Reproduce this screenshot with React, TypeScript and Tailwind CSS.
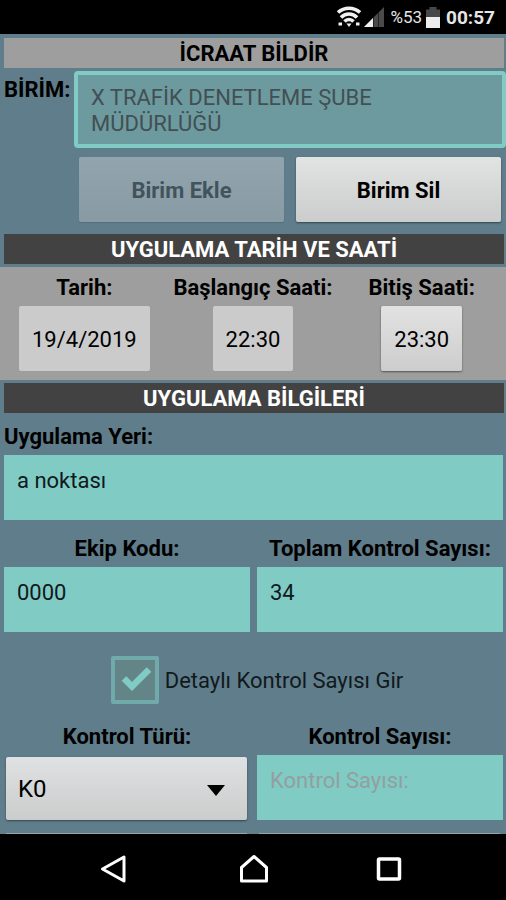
import { useState } from "react";
import type { ReactNode } from "react";

//Interface
interface SectionTitleProps {
    children: ReactNode;
    light?: boolean;
}

interface FieldProps {
    id: string;
    label: string;
    value: string;
    placeholder?: string;
    center?: boolean;
    onChange: (value: string) => void;
}

interface TimeButtonProps {
    id: string;
    label: string;
    value: string;
    raised?: boolean;
}

const StatusBar = () => {
    return (
        <header className="flex h-[34px] items-center justify-end bg-black pr-[11px] text-[#e6e6e6]">
            <svg width="24" height="22" viewBox="0 0 24 22" fill="none" stroke="#f0f0f0" strokeWidth="3.6" aria-hidden="true">
                <path d="M1 6.500C7 .8 17 .8 23 6.500" />
                <path d="M4 11.500C8.500 6.800 15.500 6.800 20 11.500" />
                <path d="M7.500 15.500c2.500-2.600 6.500-2.600 9 0" />
                <path d="M9.500 17.500h5L12 21z" fill="#f0f0f0" stroke="none" />
                <path d="M1.500 18h3.500M19 18h3.500" strokeWidth="3" />
            </svg>
            <svg className="ml-[3px]" width="20" height="20" viewBox="0 0 20 20" aria-hidden="true">
                <path d="M0 20L20 0v20z" fill="#4a4a4a" />
                <path d="M0 20l9-9v9z" fill="#f0f0f0" />
                <path d="M9.500 10v10M14.500 5v15" stroke="#222" strokeWidth="1" />
            </svg>
            <span className="ml-[6px] pt-[2px] text-[17px]">%53</span>
            <svg className="ml-1" width="14" height="21" viewBox="0 0 14 21" aria-hidden="true">
                <path d="M3.500 0h7v2.500H14V10H0V2.500h3.500z" fill="#484848" />
                <path d="M0 10h14v11H0z" fill="#ededed" />
            </svg>
            <span className="ml-[6px] pt-[2px] text-[19px] font-bold">00:57</span>
        </header>
    );
};

const SectionTitle = ({ children, light }: SectionTitleProps) => {
    return (
        <h2 className={`ml-1 mr-[2px] pt-[2px] text-center text-[22px] leading-[28px] font-bold ${light ? "bg-[#9e9e9e] text-black" : "bg-[#424242] text-white"}`}>
            {children}
        </h2>
    );
};

const Field = ({ id, label, value, placeholder, center, onChange }: FieldProps) => {
    return (
        <div className="min-w-0 flex-1">
            <label htmlFor={id} className={`block text-[22px] leading-[26px] font-bold ${center ? "text-center" : ""}`}>
                {label}
            </label>
            <input
                id={id}
                type="text"
                value={value}
                placeholder={placeholder}
                onChange={(e) => onChange(e.target.value)}
                className="mt-[5px] block h-[65px] w-full bg-[#80cbc4] px-[13px] pb-[15px] text-[22px] text-[#10191c] outline-none placeholder:text-[#939f9f]"
            />
        </div>
    );
};

const TimeButton = ({ id, label, value, raised }: TimeButtonProps) => {
    return (
        <div className="flex flex-col items-center">
            <label htmlFor={id} className="text-[22px] leading-[26px] font-bold">{label}</label>
            <button
                id={id}
                type="button"
                className={`mt-[5px] h-[65px] rounded-xs px-[13px] pt-[2px] text-[22px] ${raised ? "bg-linear-to-b from-[#e2e2e2] to-[#cdcdcd] shadow-[0_1px_2px_#555]" : "bg-[#cbcbcb]"}`}
            >
                {value}
            </button>
        </div>
    );
};

const NavBar = () => {
    return (
        <nav className="flex h-[66px] items-center justify-between bg-black pt-1 pr-[101px] pl-[100px]">
            <button type="button" aria-label="Geri">
                <svg width="32" height="32" viewBox="0 0 32 32" fill="none" stroke="#fff" strokeWidth="3">
                    <path d="M2.500 16L24 4v24z" strokeLinejoin="round" />
                </svg>
            </button>
            <button type="button" aria-label="Ana ekran">
                <svg width="32" height="32" viewBox="0 0 32 32" fill="none" stroke="#fff" strokeWidth="3">
                    <path d="M4.500 28V14.500L17 3.500l12.500 11V28z" strokeLinejoin="round" />
                </svg>
            </button>
            <button type="button" aria-label="Son uygulamalar">
                <svg width="32" height="32" viewBox="0 0 32 32" fill="none" stroke="#fff" strokeWidth="3.500">
                    <rect x="5.500" y="6" width="21" height="20" rx="1" />
                </svg>
            </button>
        </nav>
    );
};

const App = () => {

    const [unit, setUnit] = useState<string>("X TRAFİK DENETLEME ŞUBE MÜDÜRLÜĞÜ");
    const [place, setPlace] = useState<string>("a noktası");
    const [teamCode, setTeamCode] = useState<string>("0000");
    const [total, setTotal] = useState<string>("34");
    const [detailed, setDetailed] = useState<boolean>(true);
    const [controlType, setControlType] = useState<string>("K0");
    const [controlCount, setControlCount] = useState<string>("");

    return (
        <div lang="tr" className="flex min-h-screen flex-col bg-[#607d8b] font-['Roboto',sans-serif] text-black">
            <StatusBar />
            <main className="flex flex-1 flex-col pt-1">
                <SectionTitle light>İCRAAT BİLDİR</SectionTitle>

                <div className="mt-[3px] flex items-start pl-1">
                    <label htmlFor="birim" className="mt-[6px] w-[70px] shrink-0 text-[22px] leading-[26px] font-bold">BİRİM:</label>
                    <textarea
                        id="birim"
                        rows={2}
                        value={unit}
                        onChange={(e) => setUnit(e.target.value)}
                        className="h-[77px] min-w-0 flex-1 resize-none overflow-hidden rounded-sm border-4 border-[#80cbc4] bg-[#6d9a9f] px-[13px] pt-[10px] text-[22px] leading-[26px] text-[#424f53] outline-none"
                    />
                </div>

                <div className="mt-[9px] mr-[5px] ml-[79px] flex gap-3">
                    <button type="button" disabled className="h-[65px] flex-1 rounded-xs bg-linear-to-b from-[#92a5af] to-[#889ba4] pt-[2px] text-[22px] font-bold text-[#42535c] shadow-[0_1px_1px_#56707d]">
                        Birim Ekle
                    </button>
                    <button type="button" className="h-[65px] flex-1 rounded-xs bg-linear-to-b from-[#e2e3e3] to-[#cbcccc] pt-[2px] text-[22px] font-bold shadow-[0_1px_2px_#33444c]">
                        Birim Sil
                    </button>
                </div>

                <div className="mt-3">
                    <SectionTitle>UYGULAMA TARİH VE SAATİ</SectionTitle>
                </div>
                <div className="mt-[3px] grid grid-cols-3 bg-[#9e9e9e] pt-2 pb-[9px]">
                    <TimeButton id="tarih" label="Tarih:" value="19/4/2019" />
                    <TimeButton id="baslangic" label="Başlangıç Saati:" value="22:30" />
                    <TimeButton id="bitis" label="Bitiş Saati:" value="23:30" raised />
                </div>

                <div className="mt-[3px]">
                    <SectionTitle>UYGULAMA BİLGİLERİ</SectionTitle>
                </div>

                <div className="mt-[11px] mr-[3px] ml-1 flex">
                    <Field id="yer" label="Uygulama Yeri:" value={place} onChange={setPlace} />
                </div>
                <div className="mt-4 mr-[3px] ml-1 flex gap-[7px]">
                    <Field id="ekip" label="Ekip Kodu:" value={teamCode} onChange={setTeamCode} center />
                    <Field id="toplam" label="Toplam Kontrol Sayısı:" value={total} onChange={setTotal} center />
                </div>

                <div className="mt-6 flex items-center justify-center gap-[6px] pl-2">
                    <span className="relative flex">
                        <input
                            id="detay"
                            type="checkbox"
                            checked={detailed}
                            onChange={(e) => setDetailed(e.target.checked)}
                            className="size-12 appearance-none rounded-xs border-4 border-[#71aaab] bg-[#648587]"
                        />
                        {detailed &&
                            <svg className="pointer-events-none absolute inset-0" width="48" height="48" viewBox="0 0 48 48" fill="none" aria-hidden="true">
                                <path d="M13 22.500l8 8L38 13.500" stroke="#80cbc4" strokeWidth="6.500" />
                            </svg>
                        }
                    </span>
                    <label htmlFor="detay" className="text-[22px] text-[#10191c]">Detaylı Kontrol Sayısı Gir</label>
                </div>

                <div className="mt-5 mr-[3px] ml-1 flex gap-[7px]">
                    <div className="min-w-0 flex-1">
                        <label htmlFor="tur" className="block text-center text-[22px] leading-[26px] font-bold">Kontrol Türü:</label>
                        <div className="relative mt-[7px] mr-[3px] ml-[2px]">
                            <select
                                id="tur"
                                value={controlType}
                                onChange={(e) => setControlType(e.target.value)}
                                className="block h-[63px] w-full appearance-none rounded-xs bg-linear-to-b from-[#e0e1e2] to-[#cbcccc] px-3 text-[24px] shadow-[0_1px_2px_#33444c] outline-none"
                            >
                                <option value="K0">K0</option>
                            </select>
                            <svg className="pointer-events-none absolute top-7 right-[22px]" width="18" height="11" viewBox="0 0 18 11" aria-hidden="true">
                                <path d="M0 0h18L9 11z" fill="#000" />
                            </svg>
                        </div>
                    </div>
                    <Field id="sayi" label="Kontrol Sayısı:" value={controlCount} placeholder="Kontrol Sayısı:" onChange={setControlCount} center />
                </div>

                {/* Top edges of the next row of buttons */}
                <div className="mt-auto mr-[6px] ml-[6px] flex gap-3">
                    <div className="h-px flex-1 bg-[#9aa3a6]" />
                    <div className="h-px flex-1 bg-[#9aa3a6]" />
                </div>
            </main>
            <NavBar />
        </div>
    );
};

export default App;
